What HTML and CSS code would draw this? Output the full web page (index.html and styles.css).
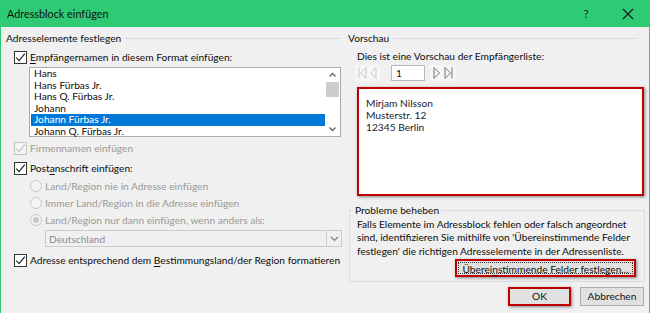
FILE: index.html
```html
<!DOCTYPE html>
<html lang="de">
<head>
<meta charset="utf-8">
<title>Adressblock einfügen</title>
<link rel="stylesheet" href="styles.css">
</head>
<body>
<div class="dialog">
  <div class="titlebar">
    <span class="title">Adressblock einfügen</span>
    <span class="tb-help">?</span>
    <span class="tb-close"><svg width="12" height="12" viewBox="0 0 12 12"><path d="M1 1L11 11M11 1L1 11" stroke="#1a1a1a" stroke-width="1.2" fill="none"/></svg></span>
  </div>
  <div class="content">
    <div class="left">
      <div class="group-head"><span>Adresselemente festlegen</span><i class="rule"></i></div>
      <div class="check row-first">
        <span class="box"><svg width="11" height="11" viewBox="0 0 11 11"><path d="M1.3 5.6L4.1 8.6L9.8 1.6" stroke="#222" stroke-width="1.2" fill="none"/></svg></span>
        <span class="lbl"><u>E</u>mpfängernamen in diesem Format einfügen:</span>
      </div>
      <div class="listbox">
        <ul class="items">
          <li>Hans</li>
          <li>Hans Fürbas Jr.</li>
          <li>Hans Q. Fürbas Jr.</li>
          <li>Johann</li>
          <li class="sel">Johann Fürbas Jr.</li>
          <li>Johann Q. Fürbas Jr.</li>
        </ul>
        <div class="vscroll">
          <svg class="arr" width="15" height="14" viewBox="0 0 15 14"><path d="M4.5 8.5L7.5 5.5L10.5 8.5" stroke="#606060" stroke-width="1.3" fill="none"/></svg>
          <div class="thumb"></div>
          <div class="track"></div>
          <svg class="arr" width="15" height="14" viewBox="0 0 15 14"><path d="M4.5 5.5L7.5 8.5L10.5 5.5" stroke="#606060" stroke-width="1.3" fill="none"/></svg>
        </div>
      </div>
      <div class="check disabled row-firm">
        <span class="box"><svg width="11" height="11" viewBox="0 0 11 11"><path d="M1.3 5.6L4.1 8.6L9.8 1.6" stroke="#c4c4c4" stroke-width="1.2" fill="none"/></svg></span>
        <span class="lbl">Firmennamen einfügen</span>
      </div>
      <div class="check row-post">
        <span class="box"><svg width="11" height="11" viewBox="0 0 11 11"><path d="M1.3 5.6L4.1 8.6L9.8 1.6" stroke="#222" stroke-width="1.2" fill="none"/></svg></span>
        <span class="lbl">Post<u>a</u>nschrift einfügen:</span>
      </div>
      <div class="radios">
        <div class="radio"><span class="circle"></span><span class="lbl">Land/Region nie in Adresse einfügen</span></div>
        <div class="radio"><span class="circle"></span><span class="lbl">Immer Land/Region in die Adresse einfügen</span></div>
        <div class="radio"><span class="circle on"><i></i></span><span class="lbl">Land/Region nur dann einfügen, wenn anders als:</span></div>
      </div>
      <div class="select">
        <span class="sel-text">Deutschland</span>
        <span class="sel-btn"><svg width="13" height="13" viewBox="0 0 13 13"><path d="M3 5L6.5 8.5L10 5" stroke="#7a7a7a" stroke-width="1.2" fill="none"/></svg></span>
      </div>
      <div class="check row-last">
        <span class="box"><svg width="11" height="11" viewBox="0 0 11 11"><path d="M1.3 5.6L4.1 8.6L9.8 1.6" stroke="#222" stroke-width="1.2" fill="none"/></svg></span>
        <span class="lbl">Adresse entsprechend dem <u>B</u>estimmungsland/der Region formatieren</span>
      </div>
    </div>
    <div class="right">
      <div class="group-head"><span>Vorschau</span><i class="rule"></i></div>
      <div class="hint">Dies ist eine Vorschau der Empfängerliste:</div>
      <div class="nav">
        <span class="navbtns">
          <svg width="9" height="14" viewBox="0 0 9 14"><path d="M1 1.5V12.5M8 1.5L2.5 7L8 12.5Z" stroke="#c9c9c9" stroke-width="1" fill="none"/></svg>
          <svg width="7" height="14" viewBox="0 0 7 14"><path d="M6 1.5L0.8 7L6 12.5Z" stroke="#c9c9c9" stroke-width="1" fill="none"/></svg>
        </span>
        <span class="navinput">1</span>
        <span class="navbtns">
          <svg width="8" height="14" viewBox="0 0 8 14"><path d="M1 1.5L6.5 7L1 12.5Z" stroke="#777" stroke-width="1" fill="none"/></svg>
          <svg width="9" height="14" viewBox="0 0 9 14"><path d="M1 1.5L6.5 7L1 12.5ZM8 1.5V12.5" stroke="#777" stroke-width="1" fill="none"/></svg>
        </span>
      </div>
      <div class="preview mark">
        <div>Mirjam Nilsson</div>
        <div>Musterstr. 12</div>
        <div>12345 Berlin</div>
      </div>
      <fieldset class="problems">
        <legend>Probleme beheben</legend>
        <p>Falls Elemente im Adressblock fehlen oder falsch angeordnet<br>sind, identifizieren Sie mithilfe von 'Übereinstimmende Felder<br>festlegen' die richtigen Adresselemente in der Adressenliste.</p>
        <div class="btnrow"><button class="btn mark match"><span class="focus">Überei<u>n</u>stimmende Felder festlegen...</span></button></div>
      </fieldset>
      <div class="footer">
        <button class="btn mark ok">OK</button>
        <button class="btn cancel">Abbrechen</button>
      </div>
    </div>
  </div>
</div>
</body>
</html>
```

FILE: styles.css
```css
* { box-sizing: border-box; }
html, body { margin: 0; padding: 0; }
body {
  width: 650px;
  height: 313px;
  overflow: hidden;
  background: #f0f0f0;
  font-family: Lato, "Noto Sans", sans-serif;
  font-size: 10.2px;
  color: #0d0d0d;
  white-space: nowrap;
}
.dialog {
  width: 650px;
  height: 313px;
  border-left: 1px solid #2ecb74;
  border-right: 1px solid #2ecb74;
  background: #f0f0f0;
}
.titlebar {
  height: 27px;
  background: #2ecb74;
  display: flex;
  align-items: center;
  padding-left: 7px;
  margin: 0 -1px;
}
.title { font-size: 10.8px; color: #111; flex: 1; }
.tb-help { font-size: 11.5px; width: 20px; text-align: center; margin-right: 24px; color: #1a1a1a; }
.tb-close { width: 16px; display: flex; justify-content: center; margin-right: 14px; }

.content { display: flex; }
.left { width: 342px; }
.right { flex: 1; }

.group-head {
  display: flex;
  align-items: center;
  height: 14px;
  margin-top: 4px;
  margin-left: 5px;
  gap: 4px;
}
.left .group-head { margin-right: 2px; }
.right .group-head { margin-left: 5px; margin-right: 11px; }
.rule { flex: 1; border-top: 1px solid #dcdcdc; margin-top: 1px; }

.check { display: flex; align-items: center; height: 14px; }
.check .box {
  width: 13px; height: 13px;
  border: 1px solid #333;
  background: #fff;
  display: flex; align-items: center; justify-content: center;
  margin-left: 13px;
  margin-right: 3px;
  flex: none;
}
.check.disabled .box { border-color: #c4c4c4; background: #f4f4f4; }
.check.disabled .lbl { color: #9a9a9a; }
u { text-decoration-thickness: 1px; text-underline-offset: 2px; }

.row-first { margin-top: 5px; }
.listbox {
  display: flex;
  margin-top: 3px;
  margin-left: 28px;
  width: 312px;
  height: 70px;
  border: 1px solid #aaaaaa;
  background: #fff;
}
.items {
  list-style: none;
  margin: 0;
  padding: 0 0 0 1px;
  flex: 1;
}
.items li { height: 11.5px; line-height: 11.5px; padding-left: 3px; }
.items li.sel { background: #0078d7; color: #fff; }
.vscroll { width: 15px; display: flex; flex-direction: column; }
.vscroll .arr { display: block; flex: none; }
.thumb { width: 13px; height: 15px; background: #cdcdcd; margin-left: 1px; }
.track { flex: 1; }

.row-firm { margin-top: 4px; }
.row-post { margin-top: 6px; }
.radios { margin-top: 2px; }
.radio { display: flex; align-items: center; height: 17px; color: #9a9a9a; }
.circle {
  width: 12px; height: 12px;
  border: 1px solid #c8c8c8;
  border-radius: 50%;
  background: #f4f4f4;
  margin-left: 29px;
  margin-right: 3px;
  display: flex; align-items: center; justify-content: center;
  flex: none;
}
.circle.on i { width: 6px; height: 6px; border-radius: 50%; background: #c8c8c8; }

.select {
  display: flex;
  align-items: center;
  margin-top: 2px;
  margin-left: 44px;
  width: 297px;
  height: 17px;
  border: 1px solid #cccccc;
  background: #f0f0f0;
}
.sel-text { flex: 1; padding-left: 3px; color: #8d8d8d; }
.sel-btn {
  width: 15px; height: 15px;
  border-left: 1px solid #cccccc;
  display: flex; align-items: center; justify-content: center;
}
.row-last { margin-top: 6px; }

.hint { height: 14px; line-height: 14px; margin-top: 4px; margin-left: 14px; }
.nav { display: flex; align-items: center; height: 16px; margin-top: 2px; margin-left: 12px; }
.navbtns {
  display: flex; align-items: center; gap: 3px;
  height: 16px; padding: 0 3px;
  background: #f6f6f6;
}
.navinput {
  width: 34px; height: 16px;
  border: 1px solid #b9b9b9;
  background: #fff;
  margin: 0 5px 0 11px;
  padding-left: 4px;
  line-height: 14px;
}
.mark {
  border: 2px solid #c00000 !important;
  box-shadow: 1px 1px 3px rgba(0,0,0,0.45);
}
.preview {
  margin-top: 6px;
  margin-left: 14px;
  width: 287px;
  height: 109px;
  background: #fff;
  padding: 8px 0 0 7px;
  line-height: 12px;
  color: #1a1a30;
}
.problems {
  margin: 8px 4px 0 6px;
  padding: 0 8px 4px 7px;
  border: 1px solid #dcdcdc;
  min-width: 0;
}
.problems legend { padding: 0 2px; margin-left: -4px; line-height: 13px; }
.problems p { margin: 1px 0 0 0; line-height: 13.3px; }
.btnrow { display: flex; justify-content: flex-end; margin-top: 1px; }
.btn {
  font-family: inherit;
  font-size: 10.2px;
  color: #111;
  background: #e1e1e1;
  border: 1px solid #adadad;
  padding: 0;
  margin: 0;
}
.match { width: 181px; height: 18px; padding: 1px; }
.match .focus {
  display: block;
  height: 100%;
  border: 1px dotted #333;
  line-height: 12px;
}
.footer { display: flex; justify-content: flex-end; gap: 9px; margin-top: 5px; margin-right: 5px; }
.ok { width: 63px; height: 19px; }
.cancel { width: 64px; height: 19px; }
```
